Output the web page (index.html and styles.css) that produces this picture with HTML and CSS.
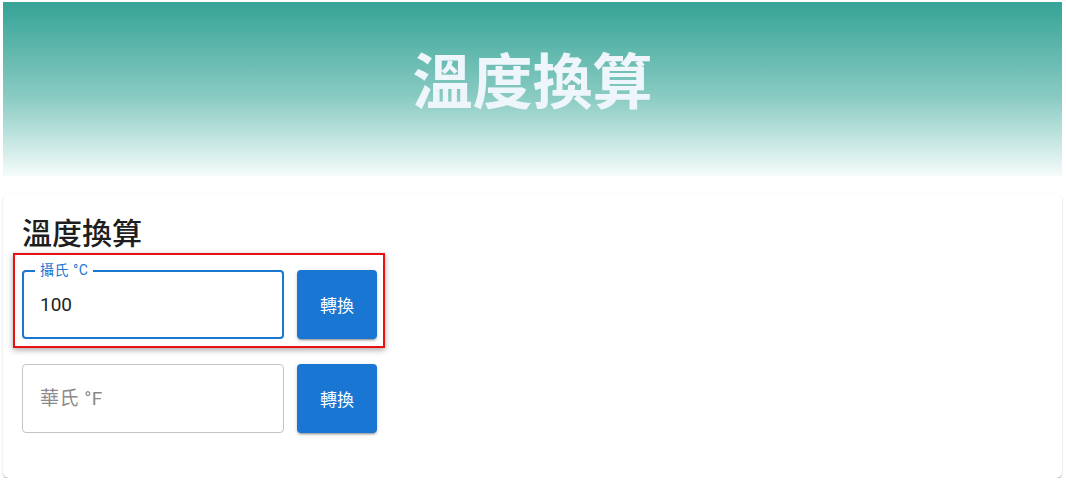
FILE: index.html
```html
<!DOCTYPE html>
<html lang="zh-Hant">
<head>
    <meta charset="UTF-8">
    <meta name="viewport" content="width=device-width, initial-scale=1.0">
    <title>溫度換算</title>
    <link rel="stylesheet" href="styles.css">
</head>
<body>
    <header class="banner">
        <h1>溫度換算</h1>
    </header>

    <main class="card">
        <h2 class="card-title">溫度換算</h2>

        <div class="row">
            <div class="field focused">
                <label for="celsius">攝氏 °C</label>
                <input type="text" id="celsius" value="100">
            </div>
            <button type="button" class="btn">轉換</button>
            <div class="highlight"></div>
        </div>

        <div class="row">
            <div class="field">
                <input type="text" id="fahrenheit" placeholder="華氏 °F">
            </div>
            <button type="button" class="btn">轉換</button>
        </div>
    </main>
</body>
</html>
```

FILE: styles.css
```css
* {
    margin: 0;
    padding: 0;
    box-sizing: border-box;
}

body {
    font-family: Roboto, "Noto Sans CJK TC", sans-serif;
    background: #fff;
    padding: 2px 4px 0 3px;
}

.banner {
    height: 174px;
    background: linear-gradient(180deg, #35a396 0%, #8acbc3 55%, #f5fcfb 100%);
    display: flex;
    align-items: center;
    justify-content: center;
}

.banner h1 {
    font-family: "Noto Sans CJK TC", sans-serif;
    font-size: 60px;
    font-weight: 700;
    color: #eef6fb;
    line-height: 1;
    margin-top: -22px;
}

.card {
    margin-top: 18px;
    background: #fff;
    border-radius: 6px;
    box-shadow: 0 2px 1px -1px rgba(0,0,0,0.2), 0 1px 1px 0 rgba(0,0,0,0.14), 0 1px 3px 0 rgba(0,0,0,0.12);
    padding: 19px 19px 20px;
}

.card-title {
    font-family: "Noto Sans CJK TC", sans-serif;
    font-size: 30px;
    font-weight: 500;
    color: #1e1e1e;
    line-height: 36px;
    margin-bottom: 21px;
}

.row {
    position: relative;
    display: flex;
    gap: 13px;
    margin-bottom: 25px;
    width: 355px;
}

.field {
    position: relative;
    width: 262px;
    height: 69px;
    border: 1px solid #c4c4c4;
    border-radius: 4px;
}

.field.focused {
    border: 2px solid #1976d2;
}

.field label {
    position: absolute;
    top: -10px;
    left: 11px;
    padding: 0 5px;
    background: #fff;
    font-size: 14px;
    line-height: 16px;
    color: #1976d2;
    letter-spacing: 0.5px;
}

.field input {
    width: 100%;
    height: 100%;
    border: none;
    outline: none;
    background: transparent;
    padding: 0 17px;
    font-family: Roboto, "Noto Sans CJK TC", sans-serif;
    font-size: 19px;
    color: #222;
}

.field.focused input {
    padding: 0 16px;
}

.field input::placeholder {
    color: #8a8a8a;
    letter-spacing: 0.5px;
}

.btn {
    width: 80px;
    height: 69px;
    border: none;
    border-radius: 4px;
    background: #1976d2;
    color: #fff;
    font-family: Roboto, "Noto Sans CJK TC", sans-serif;
    font-size: 17px;
    box-shadow: 0 3px 1px -2px rgba(0,0,0,0.2), 0 2px 2px 0 rgba(0,0,0,0.14), 0 1px 5px 0 rgba(0,0,0,0.12);
}

/* annotation box around the first row */
.highlight {
    position: absolute;
    left: -9px;
    top: -17px;
    right: -8px;
    bottom: -9px;
    border: 2px solid #e81010;
    box-shadow: 0 2px 6px rgba(0,0,0,0.35);
    pointer-events: none;
}
```
